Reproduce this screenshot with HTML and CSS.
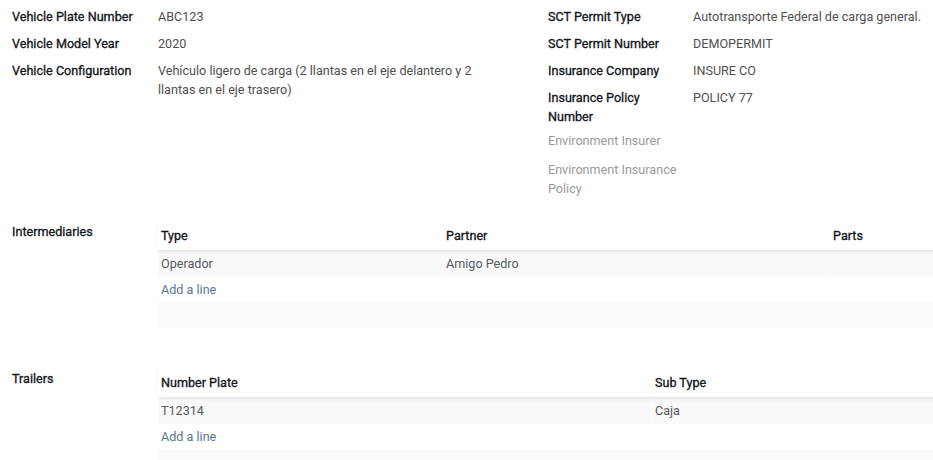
FILE: index.html
```html
<!DOCTYPE html>
<html>
<head>
<meta charset="utf-8">
<link rel="stylesheet" href="styles.css">
</head>
<body>
<div class="sheet">
  <div class="groups">
    <div class="group group-left">
      <div class="field"><div class="lbl">Vehicle Plate Number</div><div class="val">ABC123</div></div>
      <div class="field"><div class="lbl">Vehicle Model Year</div><div class="val">2020</div></div>
      <div class="field"><div class="lbl">Vehicle Configuration</div><div class="val val-wide">Vehículo ligero de carga (2 llantas en el eje delantero y 2 llantas en el eje trasero)</div></div>
    </div>
    <div class="group group-right">
      <div class="field"><div class="lbl">SCT Permit Type</div><div class="val">Autotransporte Federal de carga general.</div></div>
      <div class="field"><div class="lbl">SCT Permit Number</div><div class="val">DEMOPERMIT</div></div>
      <div class="field"><div class="lbl">Insurance Company</div><div class="val">INSURE CO</div></div>
      <div class="field"><div class="lbl">Insurance Policy Number</div><div class="val">POLICY 77</div></div>
      <div class="field field-empty field-tight"><div class="lbl lbl-muted">Environment Insurer</div><div class="val"></div></div>
      <div class="field field-empty"><div class="lbl lbl-muted">Environment Insurance Policy</div><div class="val"></div></div>
    </div>
  </div>

  <div class="section section-first">
    <div class="section-lbl">Intermediaries</div>
    <div class="list list-inter">
      <div class="row head"><div class="cell">Type</div><div class="cell">Partner</div><div class="cell">Parts</div></div>
      <div class="row data"><div class="cell">Operador</div><div class="cell">Amigo Pedro</div><div class="cell"></div></div>
      <div class="row add"><div class="cell add-link">Add a line</div></div>
      <div class="row filler"></div>
    </div>
  </div>

  <div class="section section-second">
    <div class="section-lbl">Trailers</div>
    <div class="list list-trail">
      <div class="row head"><div class="cell">Number Plate</div><div class="cell">Sub Type</div></div>
      <div class="row data"><div class="cell">T12314</div><div class="cell">Caja</div></div>
      <div class="row add"><div class="cell add-link">Add a line</div></div>
      <div class="row filler"></div>
    </div>
  </div>
</div>
</body>
</html>
```

FILE: styles.css
```css
html, body {
  margin: 0;
  padding: 0;
  overflow: hidden;
  background: #ffffff;
}

body {
  width: 933px;
  height: 460px;
  font-family: Roboto, "Noto Sans", sans-serif;
  font-size: 12.6px;
  line-height: 19px;
  color: #212529;
}

.sheet {
  padding-top: 7px;
  width: 1040px;
}

.groups {
  display: flex;
}

.group {
  display: flex;
  flex-direction: column;
}

.group-left {
  width: 524px;
  padding-left: 12px;
}

.group-right {
  width: 385px;
  padding-left: 12px;
}

.field {
  display: grid;
  grid-template-columns: 145px 1fr;
  margin-bottom: 8px;
}

.group-left .field {
  grid-template-columns: 146px 1fr;
}

.field-tight {
  margin-top: -3px;
  margin-bottom: 10px;
}

.lbl,
.section-lbl,
.head .cell {
  font-weight: 400;
  -webkit-text-stroke: 0.3px currentColor;
  color: #111418;
}

.lbl {
  padding-right: 12px;
}

.lbl-muted {
  -webkit-text-stroke: 0;
  color: #9a9a9a;
}

.val {
  color: #4f4f4f;
}

.val-wide {
  width: 340px;
}

.section {
  display: grid;
  grid-template-columns: 146px 1fr;
  padding-left: 12px;
}

.section-first {
  margin-top: 14px;
}

.section-second {
  margin-top: 39px;
}

.section-lbl {
  padding-top: 2px;
}

.list {
  display: flex;
  flex-direction: column;
}

.row {
  display: grid;
}

.list-inter .row {
  grid-template-columns: 285px 387px 210px;
}

.list-trail .row {
  grid-template-columns: 494px 388px;
}

.cell {
  padding: 0 3px;
}

.head {
  height: 30px;
  align-items: center;
  position: relative;
  z-index: 1;
  box-shadow: 0 2px 4px -1px rgba(0, 0, 0, 0.12);
}

.head .cell {
  padding-top: 1px;
}

.data {
  height: 27px;
  align-items: center;
  background: #f9f9f9;
}

.data .cell {
  color: #555a60;
  height: 100%;
  display: flex;
  align-items: center;
  border-right: 1px solid #fcfcfc;
}

.add {
  height: 25px;
  align-items: center;
}

.add-link {
  color: #5a7894;
}

.filler {
  height: 26px;
  background: #fafafa;
}
```
